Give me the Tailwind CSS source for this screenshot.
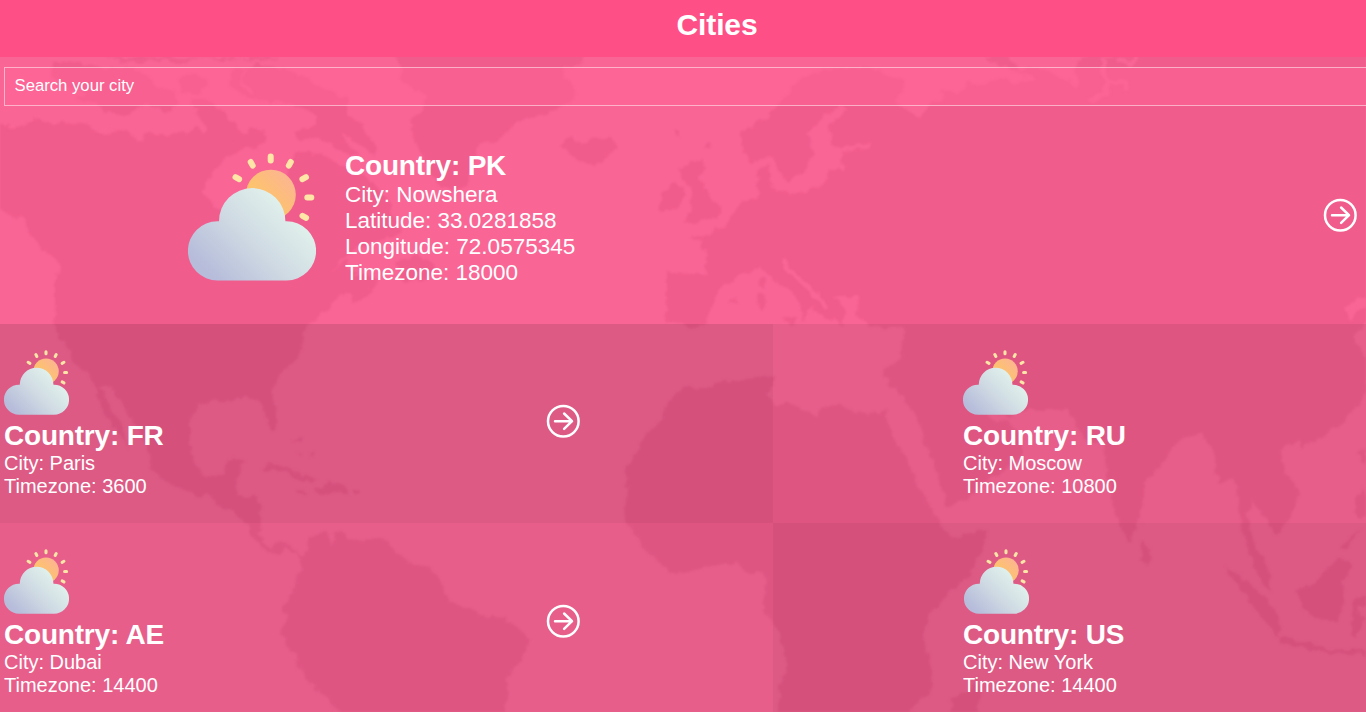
<!DOCTYPE html>
<html lang="en">
<head>
<meta charset="utf-8">
<title>Cities</title>
<script src="https://cdn.jsdelivr.net/npm/@tailwindcss/browser@4"></script>
</head>
<body class="h-[712px] overflow-hidden bg-[#f96696] font-['Liberation_Sans',Arial,sans-serif] text-white">
<svg width="0" height="0" class="absolute">
  <defs>
    <linearGradient id="cloud" gradientUnits="userSpaceOnUse" x1="22" y1="122" x2="98" y2="46"><stop offset="0" stop-color="#b6bcda"/><stop offset=".5" stop-color="#cfdae3"/><stop offset="1" stop-color="#e2f3ec"/></linearGradient>
    <linearGradient id="sun" gradientUnits="userSpaceOnUse" x1="65" y1="59" x2="101" y2="24"><stop offset="0" stop-color="#fdc861"/><stop offset=".4" stop-color="#fdc270"/><stop offset="1" stop-color="#fcb590"/></linearGradient>
    <symbol id="weather" viewBox="0 0 128 128">
      <g stroke="#ffe6a6" stroke-width="6" stroke-linecap="round">
        <path d="M82.7 3.5v4M62.7 9l2 3.6M102.8 9l-2 3.6M47.5 24.2l3.6 2M118 24.2l-3.6 2M119.3 44.5h4M114.5 62.8l3.6 2"/>
      </g>
      <circle cx="82.8" cy="41.7" r="25" fill="url(#sun)"/>
      <path d="M29.5 127.5A29.5 29.5 0 0 1 29.500 68.300H31A33.200 33.200 0 0 1 97.400 68.300H98.500A29.500 29.500 0 0 1 98.500 127.500Z" fill="url(#cloud)"/>
    </symbol>
    <symbol id="arrow" viewBox="0 0 34 34">
      <g fill="none" stroke="#fff" stroke-width="2.5" stroke-linecap="round" stroke-linejoin="round"><circle cx="17.300" cy="17.200" r="15.300"/><path d="M9 17.200h17M18.100 9.500l7.900 7.700-7.900 7.700"/></g>
    </symbol>
    <filter id="coast" x="0" y="0" width="1366" height="712" filterUnits="userSpaceOnUse" color-interpolation-filters="sRGB">
      <feTurbulence type="fractalNoise" baseFrequency=".11" numOctaves="2" seed="4" result="n"/>
      <feDisplacementMap in="SourceGraphic" in2="n" scale="9" xChannelSelector="R" yChannelSelector="G"/>
      <feGaussianBlur stdDeviation=".9"/>
    </filter>
  </defs>
</svg>

<!-- world map backdrop -->
<svg class="absolute left-0 top-0 -z-0" width="1366" height="712" viewBox="0 0 1366 712" aria-hidden="true">
  <g fill="#f05c8c" filter="url(#coast)">
    <!-- North, Central and South America -->
    <path d="M-10 122L20 127 37 118 48 124 68 122 90 126 105 135 128 130 138 141 145 134 180 134 197 127 205 133 212 122 195 115 198 108 210 107 222 120 232 132 243 140 252 128 265 130 262 145 240 150 225 160 208 178 204 192 215 208 235 215 255 222 270 215 285 185 290 165 296 152 312 152 327 157 347 168 367 178 387 198 400 232 390 238 372 242 345 258 330 270 345 262 352 270 380 280 378 286 360 300 352 303 350 292 330 303 327 313 310 322 303 332 300 350 298 358 280 375 272 390 279 420 277 431 270 430 265 415 260 403 245 395 230 402 215 400 200 405 190 420 190 450 195 465 205 478 222 475 227 462 235 457 245 460 237 480 238 496 255 497 263 505 260 525 262 540 270 548 285 540 300 555 305 555 310 538 325 530 332 545 335 533 345 532 350 540 380 538 395 550 408 563 425 566 440 578 445 595 452 602 475 610 480 616 505 618 525 633 529 645 520 662 506 680 508 690 503 720 345 720 330 700 310 685 295 657 281 633 288 617 282 610 290 595 301 570 300 557 285 547 280 556 277 556 262 548 250 537 250 527 240 517 222 508 207 493 195 497 165 480 150 468 149 450 138 428 122 406 112 388 101 386 110 405 122 425 129 448 115 428 103 412 95 386 88 373 75 365 68 350 57 332 54 322 55 300 55 275 62 268 45 250 28 232 25 220 7 215 -10 203Z"/>
    <path d="M52 62L75 61 95 68 125 68 150 76 156 88 172 90 178 105 165 112 145 103 130 113 105 112 98 104 75 99 88 92 66 87 54 78Z"/>
    <path d="M105 57H280L262 62 245 58 220 61 200 57 180 64 160 60 130 63Z"/>
    <path d="M233 72L255 64 285 68 312 82 330 92 347 98 347 115 362 126 373 142 377 155 366 152 357 142 340 132 348 144 360 156 340 152 320 138 298 141 295 132 313 127 317 118 303 108 277 102 247 97 230 85Z"/>
    <path d="M196 112l16-7 12 9 18 16 14 10-12 9-18-11-18-9ZM178 80l16-6 14 8-10 12-16-2ZM190 102l14-4 10 8-12 4Z"/>
    <path d="M392 50H584L581 65 565 67 562 78 573 85 575 98 560 108 540 115 520 120 502 137 480 143 474 155 468 185 455 192 437 182 420 152 410 124 424 105 426 94 412 88 402 82 403 72Z"/>
    <path d="M395 262l22-8 18 12-6 14-24 2Z"/>
    <path d="M260 471l10-8 15 2 15 8 18 7-13 2-20-10-12-3ZM315 488l15-6 15 5 4 5-31 1ZM296 490l12 1-3 3-8-1ZM353 490h7v3h-7ZM293 441l10-2-1 4ZM297 449l6 6-2 4ZM308 456l6-4-2 6Z"/>
    <!-- Islands of the north Atlantic -->
    <path d="M560 145l10-8 13 8 8-5 19-3 7 11-11 12-13 6-18-6-6-8ZM675 130l6 1-2 8ZM705 147l4-5 1 7ZM680 170l10-10h13l1 10-6 8 9 12 3 8 14 9-5 10-23 6h-11l8-13-3-9 3-15-10-5ZM659 206l4-14 9-9 12 4-1 13-5 7-15 6Z"/>
    <!-- Europe and Asia -->
    <path d="M667 273L697 274 706 275 708 255 700 243 690 236 707 237 715 228 723 230 735 210 745 202 760 196 758 172 768 165 772 188 790 194 820 188 828 178 829 170 843 170 842 153 870 148 870 144 833 148 828 127 850 107 838 107 830 113 808 133 813 153 803 173 787 183 773 157 752 163 740 145 740 133 767 117 780 103 800 80 833 67 867 67 903 80 905 92 895 97 908 112 920 118 930 106 945 98 940 90 960 95 967 83 985 84 1000 77 1015 84 1036 80 1020 68 1040 68 1062 78 1080 86 1075 72 1082 56 1380 50 1380 295 1366 295 1355 300 1344 308 1350 320 1366 306 1380 306 1366 325 1353 337 1360 350 1370 365 1363 397 1346 420 1329 433 1303 447 1298 440 1281 450 1283 467 1299 490 1298 507 1289 520 1276 537 1266 517 1251 500 1246 517 1253 540 1268 567 1271 592 1263 583 1251 560 1243 530 1239 500 1233 477 1219 485 1213 453 1203 433 1179 440 1159 467 1144 483 1141 520 1129 542 1123 533 1113 503 1106 470 1103 443 1085 440 1073 418 1069 410 1026 410 1010 418 990 410 975 398 970 385 980 400 990 418 1010 422 1022 440 1022 455 1000 475 985 482 965 500 947 507 940 480 923 440 918 420 906 403 897 390 890 385 882 368 897 365 902 350 905 328 870 327 855 315 857 297 835 297 845 310 843 326 835 320 825 300 812 298 810 305 805 320 800 305 790 290 775 283 763 268 745 273 733 280 715 295 712 310 703 325 690 328 680 322 665 320 667 300Z"/>
    <path d="M986 56h24l5 10 12 10-20-8-18-6ZM761 279h4l-1 9-4-2ZM758 294h8l-1 14-6 2ZM782 317l15 1-2 8-11-5ZM728 302l8-3v4Z"/>
    <path d="M785 270L800 268 822 290 838 312 830 322 806 302 790 286Z"/>
    <!-- Africa -->
    <path d="M683 387L700 389 720 382 773 376 773 385 768 395 775 403 790 403 818 417 822 407 835 404 870 415 885 410 890 428 905 458 915 480 930 505 945 530 950 538 988 529 985 545 970 575 950 592 930 615 923 635 930 665 931 690 915 705 905 720 777 720 780 685 788 670 778 630 762 605 767 585 762 573 747 573 735 562 700 569 672 574 655 560 645 550 628 525 623 512 628 490 624 470 635 455 643 437 652 430 662 420 665 405 675 396ZM950 720l2-22 18-8 8-15 3 15-7 30Z"/>
    <!-- South-east Asian islands -->
    <path d="M1142 540l11 18-5 6-8-2ZM1223 566l17 9 15 15 15 10 11 25-2 12-17-17-17-25ZM1279 637l21 3 30 9 36 2v4l-38-2-28-6-22-4ZM1297 590l14-5 14-13 15-16 12 12-9 12 2 15-8 27-17-2-17-10ZM1353 600l17-5v8l-12 5 8 12-5 4-4 14-5-2ZM1341 548l15-18 4-2-14 22ZM1356 500l8-13 6 20-8 12-6-8ZM1358 452l8-6v18l-6-2Z"/>
  </g>
  <g fill="none" stroke="#f96696" stroke-linecap="round" filter="url(#coast)">
    <path stroke-width="5" d="M1104 59l-2 12 7 10-4 13-13 6M1111 82l15 1 1 5M1120 60l8 3 8-4"/>
    <path stroke-width="5" d="M785 262l8 12 20 17 12 16"/>
    <path stroke-width="3" d="M10 127l12-6 10-2M100 131l15-6M245 70l-4 14 10 8M352 262l12 8-10 6"/>
  </g>
</svg>

<div class="relative flex h-[712px] w-[1434px] flex-col">
  <header class="flex h-[57px] shrink-0 justify-center bg-[#ff4f87] pt-[8px]">
    <h1 class="text-[30px] leading-[34px] font-bold tracking-[-0.1px]">Cities</h1>
  </header>

  <section class="flex h-[267px] shrink-0 flex-col pt-[10px]">
    <div class="ml-1 flex h-[39px] shrink-0 items-start border border-white/50 bg-[#ff6496]/50 px-[9.500px] pt-[8px] text-[16.700px] leading-[19px]">Search your city</div>
    <div class="flex pt-[44px]">
      <svg class="mt-[2.500px] ml-[188px] h-32 w-32 shrink-0"><use href="#weather"/></svg>
      <div class="ml-[29px] w-[978px]">
        <h2 class="text-[28px] leading-[32px] font-bold tracking-[-0.2px]">Country: PK</h2>
        <div class="text-[22.500px] leading-[26px]">
          <p>City: Nowshera</p>
          <p>Latitude: 33.0281858</p>
          <p>Longitude: 72.0575345</p>
          <p>Timezone: 18000</p>
        </div>
      </div>
      <svg class="mt-[48px] h-[34px] w-[34px] shrink-0"><use href="#arrow"/></svg>
    </div>
  </section>

  <main class="grid grid-cols-[773px_661px] grid-rows-[199px_199px]">
    <article class="flex bg-black/11 pt-[26px] pl-1">
      <div class="w-[542px]">
        <svg class="mb-[5px] block h-[65px] w-[65px]"><use href="#weather"/></svg>
        <h2 class="text-[28px] leading-[32px] font-bold tracking-[-0.2px]">Country: FR</h2>
        <p class="text-[20px] leading-[23px]">City: Paris</p>
        <p class="text-[20px] leading-[23px]">Timezone: 3600</p>
      </div>
      <svg class="mt-[54px] h-[34px] w-[34px]"><use href="#arrow"/></svg>
    </article>
    <article class="bg-black/7 pt-[26px] pl-[190px]">
      <svg class="mb-[5px] block h-[65px] w-[65px]"><use href="#weather"/></svg>
      <h2 class="text-[28px] leading-[32px] font-bold tracking-[-0.2px]">Country: RU</h2>
      <p class="text-[20px] leading-[23px]">City: Moscow</p>
      <p class="text-[20px] leading-[23px]">Timezone: 10800</p>
    </article>
    <article class="flex bg-black/7 pt-[26px] pl-1">
      <div class="w-[542px]">
        <svg class="mb-[5px] block h-[65px] w-[65px]"><use href="#weather"/></svg>
        <h2 class="text-[28px] leading-[32px] font-bold tracking-[-0.2px]">Country: AE</h2>
        <p class="text-[20px] leading-[23px]">City: Dubai</p>
        <p class="text-[20px] leading-[23px]">Timezone: 14400</p>
      </div>
      <svg class="mt-[54.500px] h-[34px] w-[34px]"><use href="#arrow"/></svg>
    </article>
    <article class="bg-black/11 pt-[26px] pl-[190px]">
      <svg class="mb-[5px] ml-px block h-[65px] w-[65px]"><use href="#weather"/></svg>
      <h2 class="text-[28px] leading-[32px] font-bold tracking-[-0.2px]">Country: US</h2>
      <p class="text-[20px] leading-[23px]">City: New York</p>
      <p class="text-[20px] leading-[23px]">Timezone: 14400</p>
    </article>
  </main>
</div>
</body>
</html>
